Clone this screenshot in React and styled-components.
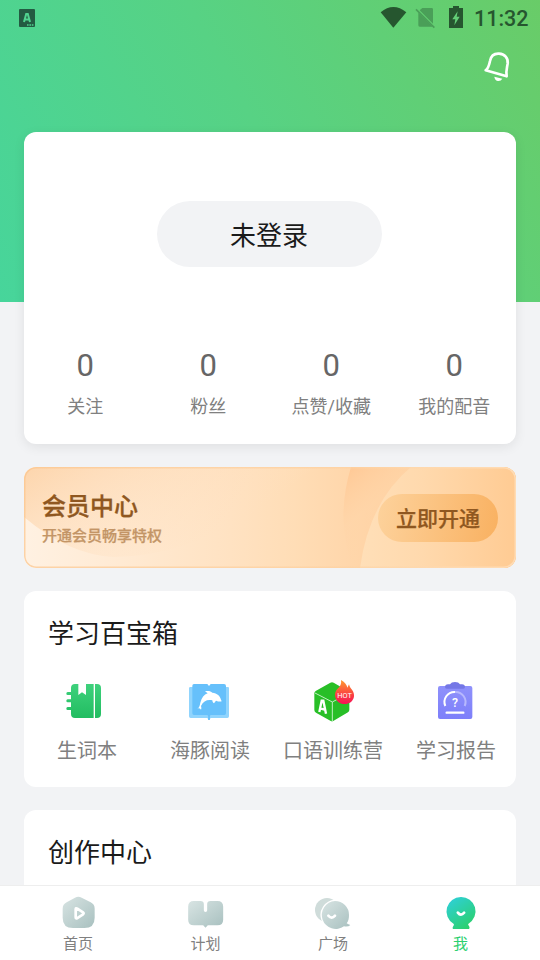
import React from 'react';
import styled, { createGlobalStyle } from 'styled-components';

const GlobalStyle = createGlobalStyle`
    * {
        box-sizing: border-box;
    }
    body {
        margin: 0;
        font-family: Roboto, "Noto Sans CJK SC", sans-serif;
        background: #f2f3f5;
    }
    svg {
        display: block;
        flex-shrink: 0;
    }
`;

const Screen = styled.div`
    display: flex;
    flex-direction: column;
    width: 540px;
    height: 960px;
    overflow: hidden;
    background: #f2f3f5 linear-gradient(61deg, #47d59b 0%, #57d284 50%, #69cc68 100%) no-repeat 0 0 / 100% 302px;
`;

const StatusBar = styled.header`
    display: flex;
    align-items: center;
    justify-content: space-between;
    flex-shrink: 0;
    height: 36px;
    padding: 0 11px 0 19px;
`;

const StatusIcons = styled.div`
    display: flex;
    align-items: center;
`;

const Clock = styled.span`
    margin-left: 10px;
    padding-top: 2px;
    width: 55px;
    font-size: 21.5px;
    font-weight: 500;
    line-height: 36px;
    color: #26562f;
    white-space: nowrap;
`;

const TopBar = styled.div`
    display: flex;
    justify-content: flex-end;
    flex-shrink: 0;
    height: 96px;
    padding: 13px 25px 0 0;
`;

const Content = styled.main`
    display: flex;
    flex-direction: column;
    flex: 1;
    min-height: 0;
    overflow: hidden;
    padding: 0 24px;
    margin-top: -12px;
    padding-top: 12px;
`;

const ProfileCard = styled.section`
    display: flex;
    flex-direction: column;
    align-items: center;
    flex-shrink: 0;
    height: 312px;
    padding-top: 69px;
    border-radius: 12px;
    background: #fff;
    box-shadow: 0 3px 12px rgba(0, 0, 0, 0.08);
`;

const LoginButton = styled.button`
    width: 225px;
    height: 66px;
    margin-right: 1px;
    padding: 0 1px 1px 0;
    border: none;
    border-radius: 33px;
    background: #f2f3f5;
    font: inherit;
    font-size: 26px;
    color: #1a1a1a;
`;

const Stats = styled.div`
    display: grid;
    grid-template-columns: repeat(4, 123px);
    width: 100%;
    margin-top: 78px;
`;

const Stat = styled.div`
    display: flex;
    flex-direction: column;
    align-items: center;
    padding-right: 0.4px;
`;

const StatValue = styled.span`
    font-size: 31px;
    line-height: 42px;
    color: #666;
`;

const StatLabel = styled.span`
    margin-top: 7px;
    font-size: 18px;
    line-height: 26px;
    color: #808080;
    white-space: nowrap;
`;

const VipBanner = styled.section`
    display: grid;
    flex-shrink: 0;
    height: 101px;
    margin-top: 23px;
    border-radius: 12px;
    overflow: hidden;

    & > * {
        grid-area: 1 / 1;
    }
`;

const VipBody = styled.div`
    position: relative;
    display: flex;
    align-items: center;
    justify-content: space-between;
    padding: 0 18px;
    color: #8f5720;
`;

const VipTitle = styled.h2`
    margin: 2px 0 1px;
    font-size: 24px;
    font-weight: 500;
    line-height: 34px;
    -webkit-text-stroke: 0.3px currentColor;
`;

const VipNote = styled.p`
    margin: 0;
    font-size: 15px;
    font-weight: 500;
    line-height: 22px;
    color: #c39566;
    -webkit-text-stroke: 0.25px currentColor;
`;

const VipButton = styled.button`
    width: 120px;
    height: 48px;
    padding: 0 0 2px;
    border: none;
    border-radius: 24px;
    background: linear-gradient(100deg, #fdd29c, #f9b161);
    font: inherit;
    font-size: 21px;
    font-weight: 500;
    color: #8f5720;
    -webkit-text-stroke: 0.25px currentColor;
`;

const Section = styled.section`
    flex-shrink: 0;
    height: 196px;
    margin-top: 23px;
    padding-top: 24px;
    border-radius: 12px;
    background: #fff;
`;

const SectionTitle = styled.h2`
    margin: 0 0 0 24px;
    font-size: 26px;
    font-weight: 400;
    line-height: 38px;
    color: #1a1a1a;
`;

const Tools = styled.div`
    display: grid;
    grid-template-columns: repeat(4, 123px);
    margin: 23px 0 0 1.5px;
`;

const Tool = styled.div`
    display: flex;
    flex-direction: column;
    align-items: center;
    font-size: 20px;
    line-height: 30px;
    color: #808080;
    white-space: nowrap;

    svg {
        margin-bottom: 12px;
    }
`;

const TabBar = styled.nav`
    display: grid;
    grid-template-columns: repeat(4, 127.5px);
    flex-shrink: 0;
    height: 75px;
    padding: 7px 0 0 14.25px;
    border-top: 1px solid #eee;
    background: #fff;
`;

const Tab = styled.div`
    display: flex;
    flex-direction: column;
    align-items: center;
    font-size: 15px;
    line-height: 22px;
    color: ${({ $active }) => ($active ? '#2bcf6f' : '#808080')};
`;

const AppBadgeIcon = () => (
    <svg width="16" height="18" viewBox="0 0 16 18">
        <rect width="16" height="18" rx="1" fill="#235b42" />
        <path d="M5 13 7.200 5h1.600L11 13M5.800 10.500h4.400" fill="none" stroke="#50d38f" strokeWidth="2" />
        <path d="M8 16h7" stroke="#50d38f" strokeWidth="1.4" strokeDasharray="1.6 .8" />
    </svg>
);

const SystemIcons = () => (
    <svg width="84" height="36" viewBox="30 0 252 108">
        <path d="M32 37q38-32 77 0L70 83Z" fill="#26562f" />
        <path d="M157 24h28q4 0 4 4v43L149 31Zm-12 14 43 42h-39q-4 0-4-4Z" fill="#4a9f58" />
        <path d="m138 28 55 55" stroke="#4a9f58" strokeWidth="5" />
        <path d="M237 24h12v-6h18v6h12v60h-42Z" fill="#26562f" />
        <path d="m263 34-16 24h9l-3 18 16-26h-9Z" fill="#63ce77" />
    </svg>
);

const BellIcon = () => (
    <svg width="36" height="36" viewBox="327 147 108 108">
        <path
            d="M347 211c9-7 10-15 13-28 3-15 12-23 27-22 17 1 28 13 26 30-2 13-6 22-3 38Z"
            fill="none"
            stroke="#fff"
            strokeWidth="8"
            strokeLinejoin="round"
        />
        <path d="m373 230 24 6q-4 8-14 7-9-3-10-13Z" fill="#fff" />
    </svg>
);

const VipBackground = () => (
    <svg width="492" height="101" viewBox="0 0 492 101">
        <defs>
            <linearGradient id="vipBase">
                <stop offset="0" stopColor="#fff1e2" />
                <stop offset=".42" stopColor="#ffe2c2" />
                <stop offset=".55" stopColor="#ffddb6" />
                <stop offset=".72" stopColor="#ffd3a5" />
                <stop offset="1" stopColor="#ffcb93" />
            </linearGradient>
            <linearGradient id="vipLeft" x1="0" y1="0" x2=".85" y2=".4">
                <stop offset="0" stopColor="#fdd5ac" />
                <stop offset="1" stopColor="#ffe2c3" stopOpacity="0" />
            </linearGradient>
            <linearGradient id="vipArc" x1="0" y1="0" x2=".5" y2=".8">
                <stop offset="0" stopColor="#ffc793" />
                <stop offset=".55" stopColor="#ffd5a8" stopOpacity=".5" />
                <stop offset="1" stopColor="#ffd5a8" stopOpacity="0" />
            </linearGradient>
            <linearGradient id="vipRight">
                <stop offset="0" stopColor="#ffdfb8" />
                <stop offset=".4" stopColor="#ffd9ad" />
                <stop offset="1" stopColor="#ffcb93" />
            </linearGradient>
            <linearGradient id="vipEdge">
                <stop offset="0" stopColor="#fcc58c" stopOpacity=".7" />
                <stop offset=".6" stopColor="#fdcf9d" stopOpacity=".6" />
                <stop offset="1" stopColor="#ffe0bd" stopOpacity=".8" />
            </linearGradient>
        </defs>
        <rect width="492" height="101" fill="url(#vipBase)" />
        <path d="M0 0h290Q190 89 90 90 45 88 0 50Z" fill="url(#vipLeft)" />
        <path d="M327 0h66q-43 35-58 101h-6q-18-48-2-101Z" fill="url(#vipArc)" />
        <path d="M387 0h105v101H336q9-66 51-101Z" fill="url(#vipRight)" />
        <rect x=".75" y=".75" width="490.5" height="99.5" rx="11.5" fill="none" stroke="url(#vipEdge)" strokeWidth="1.5" />
    </svg>
);

const WordBookIcon = () => (
    <svg width="48" height="48" viewBox="69 18 144 144">
        <defs>
            <linearGradient id="wordBook" x1="0" y1="0" x2="0" y2="1">
                <stop offset="0" stopColor="#3ed17c" />
                <stop offset="1" stopColor="#22bd61" />
            </linearGradient>
        </defs>
        <path
            d="M105 42h10v33l11-8 12 8V42h23v102h-56q-12 0-12-12v-12H83q-4 0-4-4.500t4-4.500h10V97H83q-4 0-4-4.500t4-4.500h10V75H83q-4 0-4-4.500t4-4.500h10V54q0-12 12-12Zm60 0h6q12 0 12 12v78q0 12-12 12h-6Z"
            fill="url(#wordBook)"
        />
    </svg>
);

const DolphinIcon = () => (
    <svg width="48" height="48" viewBox="438 18 144 144">
        <path d="M451 51h113q3 0 3 4v84q0 5-5 5h-50l-5 7-5-7h-50q-5 0-5-5V55q0-4 4-4Z" fill="#90d4fd" />
        <path d="M462 42h40l5 6 5-6h40q6 0 6 6v82q0 5-5 5h-41l-5 5-5-5h-40q-5 0-5-5V47q0-5 5-5Z" fill="#66c0fb" />
        <path d="M507 136v14" stroke="#66c0fb" strokeWidth="5" />
        <path
            d="M472 115c7-2 7-9 9-17 4-15 11-24 22-28l-8-6c10-2 17-1 22 4 14 1 24 10 26 21l2 5c-5 2-12 0-17-2l-6 8c-3-2-5-5-5-9-15-3-27 2-34 17 1 4 2 7 0 11-3-4-7-5-12-4Z"
            fill="#fff"
        />
    </svg>
);

const CampIcon = () => (
    <svg width="48" height="48" viewBox="87 18 144 144">
        <defs>
            <linearGradient id="flame" x1="0" y1="0" x2="0" y2="1">
                <stop offset="0" stopColor="#ff9a2e" />
                <stop offset=".55" stopColor="#fb493f" />
                <stop offset="1" stopColor="#f51157" />
            </linearGradient>
        </defs>
        <path
            d="M151 38q5-3 10 0l43 25q4 3 4 7v49q0 5-4 8l-43 25q-5 3-10 0l-43-24q-5-3-5-8V70q0-4 4-7Z"
            fill="#28bf27"
        />
        <path d="m105 69 52 27 50-27M157 96v58" fill="none" stroke="#bff0bf" strokeWidth="3" />
        <path d="m118 126 7-34 5 0 8 39M120 115l14 4" fill="none" stroke="#fff" strokeWidth="7" />
        <path
            d="M183 30c12 7 18 15 19 23l5-10c2 8 5 12 10 18 8 13 6 24-1 32-14 14-35 11-45-1-9-12-7-27 1-35 9-8 13-15 11-27Z"
            fill="url(#flame)"
        />
        <text x="194" y="83" textAnchor="middle" fontFamily="Roboto, sans-serif" fontSize="20" fontWeight="400" textLength="44" lengthAdjust="spacingAndGlyphs" fill="#fff">
            HOT
        </text>
    </svg>
);

const ReportIcon = () => (
    <svg width="48" height="48" viewBox="456 18 144 144">
        <defs>
            <linearGradient id="report" x1="0" y1="0" x2="0" y2="1">
                <stop offset="0" stopColor="#8f91fb" />
                <stop offset="1" stopColor="#7d7ffa" />
            </linearGradient>
        </defs>
        <rect x="474" y="48" width="103" height="99" rx="6" fill="url(#report)" />
        <path d="M500 56q-5 0-5-5 0-7 9-8h6q4-7 15-7t15 7h6q9 1 9 8 0 5-5 5Z" fill="#7477e6" />
        <path d="M496 108A30 30 0 0 1 525 66" fill="none" stroke="#fff" strokeWidth="6" />
        <path d="M525 66A30 30 0 0 1 554 108" fill="none" stroke="#b7b8fd" strokeWidth="6" />
        <path d="M500 128h50" stroke="#fff" strokeWidth="7" strokeLinecap="round" />
        <text x="525" y="110" textAnchor="middle" fontFamily="Roboto, sans-serif" fontSize="37" fontWeight="500" fill="#fff">
            ?
        </text>
    </svg>
);

const HomeIcon = () => (
    <svg width="40" height="40" viewBox="54 39 120 120">
        <defs>
            <linearGradient id="tabGray" x1="0" y1="0" x2="1" y2="1">
                <stop offset="0" stopColor="#d8e4e3" />
                <stop offset="1" stopColor="#a8c0bf" />
            </linearGradient>
        </defs>
        <path d="M105 53q10-5 20 0l27 14q12 6 12 19v27q0 31-31 31H99q-31 0-31-31V86q0-13 12-19Z" fill="url(#tabGray)" />
        <path d="M107 88v24q0 5 5 2l17-11q4-3 0-6l-17-11q-5-3-5 2Z" fill="none" stroke="#fff" strokeWidth="8" />
    </svg>
);

const PlanIcon = () => (
    <svg width="40" height="40" viewBox="437.5 39 120 120">
        <path
            d="M461 63h20q10 0 10 9v19q0 5 5 5t5-5V72q0-9 10-9h21q17 0 17 17v39q0 17-17 17h-29l-7 7-7-7h-28q-17 0-17-17V80q0-17 17-17Z"
            fill="url(#tabGray)"
        />
    </svg>
);

const SquareIcon = () => (
    <svg width="40" height="40" viewBox="69 39 120 120">
        <circle cx="111" cy="90" r="36" fill="#cfdcda" />
        <path
            d="M135 63a42 42 0 0 1 42 42c0 11-2 19-7 25q5 4 11 5-6 6-19 4a42 42 0 1 1-27-76Z"
            fill="url(#tabGray)"
            stroke="#fff"
            strokeWidth="8"
            paintOrder="stroke"
        />
        <path d="M115 107q10 12 20 0" fill="none" stroke="#fff" strokeWidth="8" strokeLinecap="round" />
    </svg>
);

const MeIcon = () => (
    <svg width="40" height="40" viewBox="451.5 39 120 120">
        <defs>
            <linearGradient id="tabGreen" x1="0" y1="0" x2=".65" y2="1">
                <stop offset="0" stopColor="#2fd0e0" />
                <stop offset="1" stopColor="#2bd070" />
            </linearGradient>
        </defs>
        <path
            d="M511 51a43 43 0 0 1 23 80q-3 3 1 6 4 4 1 10h-49q-2-6 2-10 3-3 0-6a43 43 0 0 1 22-80Z"
            fill="url(#tabGreen)"
        />
        <path d="M502 98q9 12 19 0" fill="none" stroke="#fff" strokeWidth="8" strokeLinecap="round" />
    </svg>
);

const stats = ['关注', '粉丝', '点赞/收藏', '我的配音'];

const tools = [
    { label: '生词本', Icon: WordBookIcon },
    { label: '海豚阅读', Icon: DolphinIcon },
    { label: '口语训练营', Icon: CampIcon },
    { label: '学习报告', Icon: ReportIcon },
];

const tabs = [
    { label: '首页', Icon: HomeIcon },
    { label: '计划', Icon: PlanIcon },
    { label: '广场', Icon: SquareIcon },
    { label: '我', Icon: MeIcon, active: true },
];

export default function App() {
    return (
        <Screen>
            <GlobalStyle />
            <StatusBar>
                <AppBadgeIcon />
                <StatusIcons>
                    <SystemIcons />
                    <Clock>11:32</Clock>
                </StatusIcons>
            </StatusBar>
            <TopBar>
                <BellIcon />
            </TopBar>
            <Content>
                <ProfileCard>
                    <LoginButton>未登录</LoginButton>
                    <Stats>
                        {stats.map((label) => (
                            <Stat key={label}>
                                <StatValue>0</StatValue>
                                <StatLabel>{label}</StatLabel>
                            </Stat>
                        ))}
                    </Stats>
                </ProfileCard>
                <VipBanner>
                    <VipBackground />
                    <VipBody>
                        <div>
                            <VipTitle>会员中心</VipTitle>
                            <VipNote>开通会员畅享特权</VipNote>
                        </div>
                        <VipButton>立即开通</VipButton>
                    </VipBody>
                </VipBanner>
                <Section>
                    <SectionTitle>学习百宝箱</SectionTitle>
                    <Tools>
                        {tools.map(({ label, Icon }) => (
                            <Tool key={label}>
                                <Icon />
                                {label}
                            </Tool>
                        ))}
                    </Tools>
                </Section>
                <Section>
                    <SectionTitle>创作中心</SectionTitle>
                </Section>
            </Content>
            <TabBar>
                {tabs.map(({ label, Icon, active }) => (
                    <Tab key={label} $active={active}>
                        <Icon />
                        {label}
                    </Tab>
                ))}
            </TabBar>
        </Screen>
    );
}
